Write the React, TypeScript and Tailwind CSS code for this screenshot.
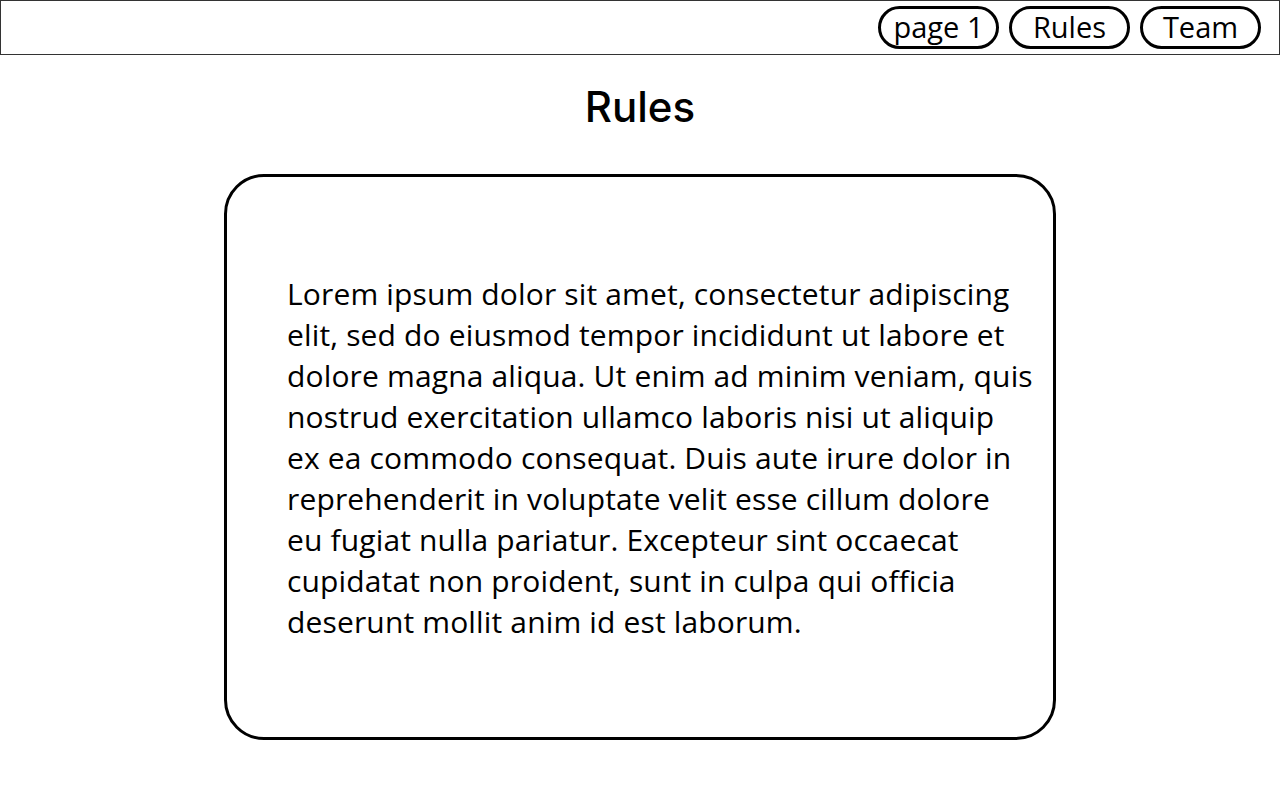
import React from "react";

const lines = [
  "Lorem ipsum dolor sit amet, consectetur adipiscing",
  "elit, sed do eiusmod tempor incididunt ut labore et",
  "dolore magna aliqua. Ut enim ad minim veniam, quis",
  "nostrud exercitation ullamco laboris nisi ut aliquip",
  "ex ea commodo consequat. Duis aute irure dolor in",
  "reprehenderit in voluptate velit esse cillum dolore",
  "eu fugiat nulla pariatur. Excepteur sint occaecat",
  "cupidatat non proident, sunt in culpa qui officia",
  "deserunt mollit anim id est laborum.",
];

export default function App() {
  return (
    <div className="w-[1280px] h-[800px] bg-white text-black" style={{ fontFamily: "'Open Sans', sans-serif" }}>
      <header className="h-[55px] border border-[#333] flex items-center justify-end gap-[10px] pr-[18px]">
        {["page 1", "Rules", "Team"].map((t) => (
          <button
            key={t}
            className="w-[121px] h-[43px] border-[3px] border-black rounded-full flex items-center justify-center text-[29px] leading-none pb-[2px]"
          >
            {t}
          </button>
        ))}
      </header>
      <h1 className="mt-[27px] text-center text-[42px] font-medium leading-[50px]" style={{ fontFamily: "Inter, sans-serif" }}>
        Rules
      </h1>
      <div className="mx-auto mt-[42px] w-[832px] h-[566px] border-[3px] border-black rounded-[40px] flex items-center pl-[60px]">
        <p className="text-[30px] leading-[41px] tracking-[0.15px] whitespace-nowrap">
          {lines.map((l) => (
            <span key={l} className="block">
              {l}
            </span>
          ))}
        </p>
      </div>
    </div>
  );
}
